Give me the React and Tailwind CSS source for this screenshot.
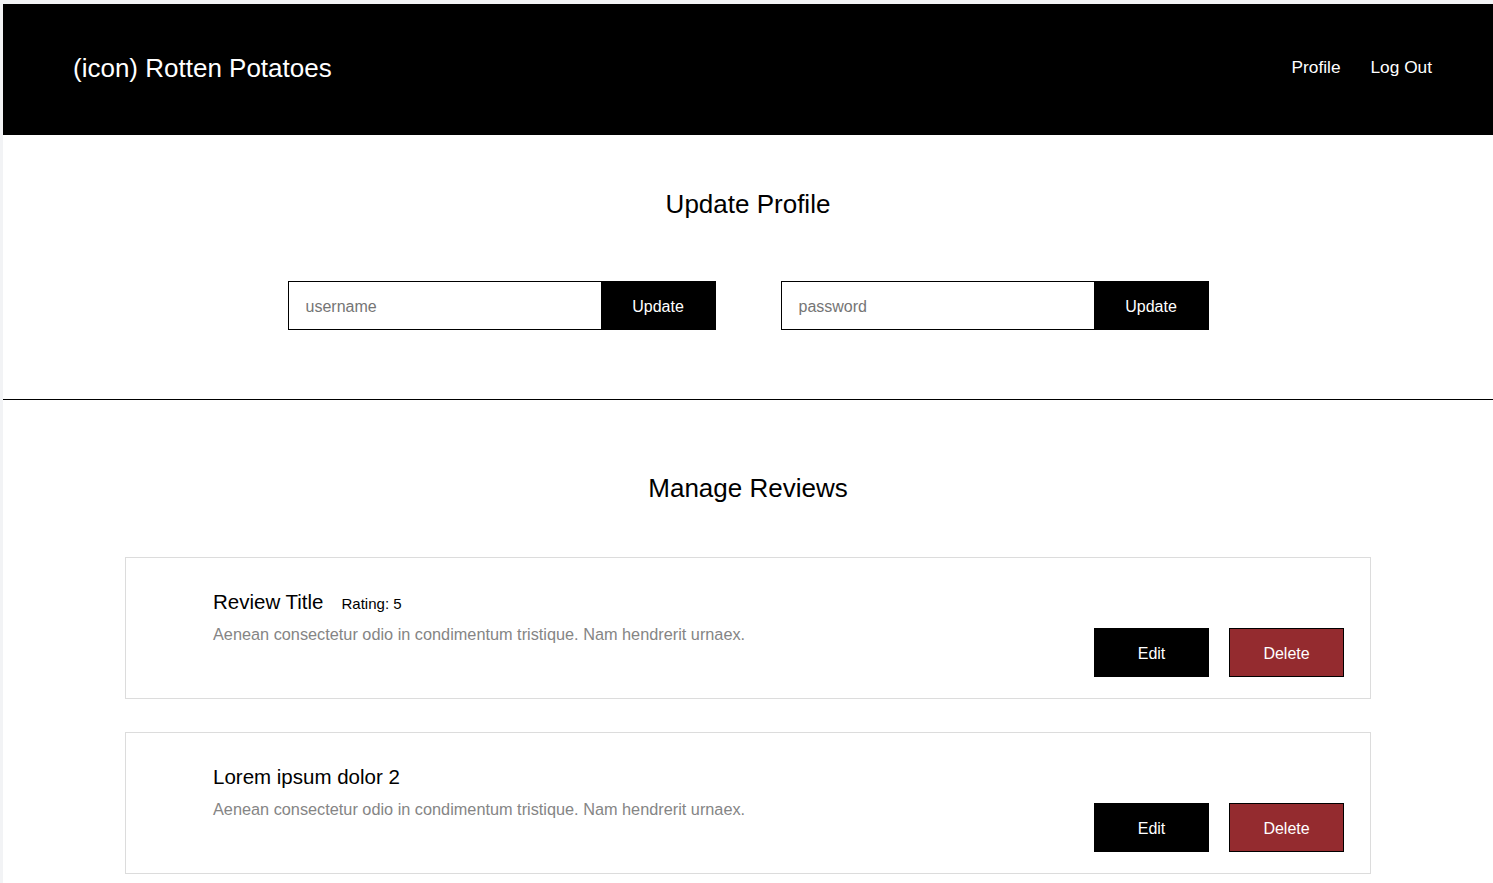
import React from "react"

const reviews = [
  { title: "Review Title", rating: 5, body: "Aenean consectetur odio in condimentum tristique. Nam hendrerit urnaex." },
  { title: "Lorem ipsum dolor 2", body: "Aenean consectetur odio in condimentum tristique. Nam hendrerit urnaex." },
]

function UpdateField({ placeholder }) {
  return (
    <div className="flex h-[49px] w-[428px]">
      <input
        className="h-full w-[313px] border border-r-0 border-black bg-white pl-[17px] pt-[2px] text-[16px] text-black outline-none placeholder:text-[#757575]"
        placeholder={placeholder}
      />
      <button className="h-full w-[115px] bg-black pt-[2px] text-[16px] text-white">Update</button>
    </div>
  )
}

function ReviewCard({ title, rating, body }) {
  return (
    <div className="flex h-[142px] justify-between border border-[#dcdcdc] bg-white pl-[87px] pr-[26px]">
      <div className="flex flex-col pt-[32px]">
        <div className="flex h-[23px] items-baseline gap-[18px]">
          <h3 className="text-[20.5px] leading-[23px] text-black">{title}</h3>
          {rating !== undefined && <span className="text-[15px] leading-[17px] text-black">Rating: {rating}</span>}
        </div>
        <p className="mt-[12px] text-[16.3px] leading-[18px] text-[#858585]">{body}</p>
      </div>
      <div className="flex gap-[20px] self-end pb-[21px]">
        <button className="h-[49px] w-[115px] bg-black pt-[2px] text-[16px] text-white">Edit</button>
        <button className="h-[49px] w-[115px] border border-black bg-[#942b2f] pt-[2px] text-[16px] text-white">Delete</button>
      </div>
    </div>
  )
}

export default function App() {
  return (
    <div className="min-h-screen bg-[#f2f3f5] pl-[3px] pt-[4px] font-['Liberation_Sans',Arial,sans-serif]">
      <div className="min-h-[879px] bg-white">
        <header className="flex h-[131px] items-center justify-between bg-black pl-[70px] pr-[61px]">
          <h1 className="mb-[2px] text-[26px] text-white">(icon) Rotten Potatoes</h1>
          <nav className="mb-[4px] flex gap-[30px] text-[17.3px] text-white">
            <a>Profile</a>
            <a>Log Out</a>
          </nav>
        </header>

        <section className="flex flex-col items-center pt-[54px] pb-[69px]">
          <h2 className="text-[26px] leading-[30px] text-black">Update Profile</h2>
          <div className="mt-[62px] flex gap-[65px]">
            <UpdateField placeholder="username" />
            <UpdateField placeholder="password" />
          </div>
        </section>

        <hr className="border-t border-black" />

        <section className="pt-[73px] pb-[10px]">
          <h2 className="text-center text-[26px] leading-[30px] text-black">Manage Reviews</h2>
          <div className="mx-[122px] mt-[54px] flex flex-col gap-[33px]">
            {reviews.map((r, i) => (
              <ReviewCard key={i} {...r} />
            ))}
          </div>
        </section>
      </div>
    </div>
  )
}
